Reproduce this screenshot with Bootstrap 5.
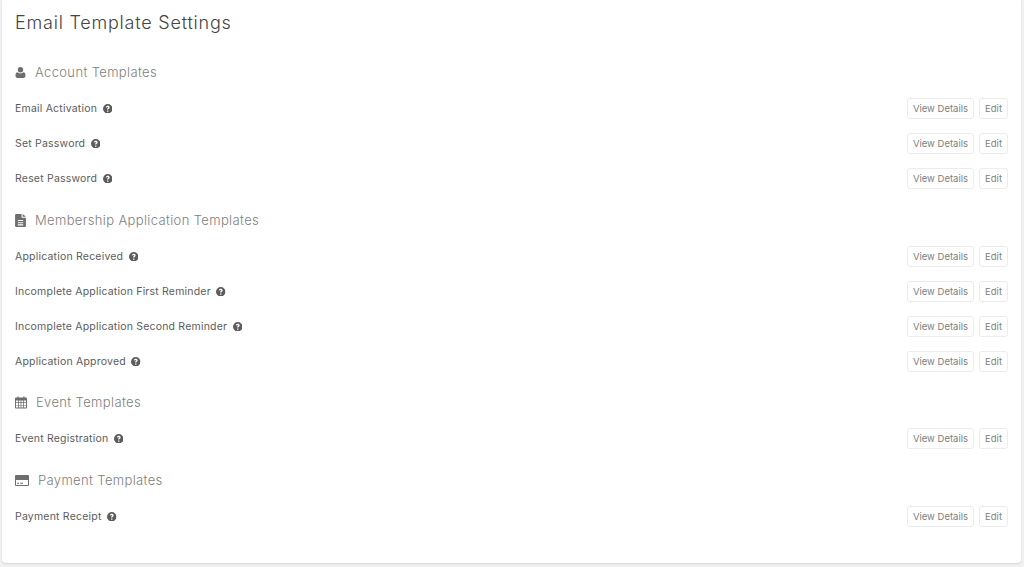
<!DOCTYPE html>
<html lang="en">
<head>
    <meta charset="UTF-8">
    <meta name="viewport" content="width=device-width, initial-scale=1.0">
    <title>Email Template Settings</title>
    <link href="https://cdn.jsdelivr.net/npm/bootstrap@5.3.0/dist/css/bootstrap.min.css" rel="stylesheet">
    <style>
        html, body { height: 100%; }
        body { background: #f1f1f1; font-family: Inter, "Open Sans", "Liberation Sans", sans-serif; overflow: hidden; }
        .sheet { margin: 0 3px 0 2px; height: 563px; border: 0; border-radius: 0 0 4px 4px; padding: 12px 13px 0; box-shadow: 0 1px 2px rgba(0,0,0,.12); }
        .page-title { font-size: 18px; line-height: 22px; font-weight: 300; color: #444; margin: 0 0 28px; letter-spacing: .78px; }
        .group-title { font-size: 13px; line-height: 21px; height: 21px; font-weight: 300; color: #808080; margin: 14px 0 8px; letter-spacing: .36px; gap: 9px; }
        .group-first { margin-top: 0; }
        .group-tight { margin-top: 13px; }
        .group-title svg { fill: #6e6e6e; display: block; }
        .tpl-row { height: 35px; font-size: 10.5px; color: #5c5c5c; letter-spacing: .2px; }
        .tip { width: 9.5px; height: 9.5px; fill: #5c5c5c; margin-left: 5.5px; }
        .btn-group-tpl { gap: 5px; }
        .btn-tpl { font-size: 9.5px; line-height: 13px; padding: 3px 5px; color: #808080; background: #fff; border: 1px solid #ececec; border-radius: 3px; letter-spacing: 0; }
    </style>
</head>
<body>
    <svg width="0" height="0" class="position-absolute">
        <symbol id="i-help" viewBox="0 0 16 16">
            <path fill-rule="evenodd" d="M8 0a8 8 0 1 1 0 16A8 8 0 0 1 8 0zM8 3C6.200 3 5 4 4.700 5.500l2 .5C6.900 5.300 7.300 5 8 5c.6 0 1 .3 1 .8 0 .5-.4.700-1 1.100-.7.400-1.100 1-1.100 1.900v.4h2.100v-.3c0-.4.300-.6.900-1 .8-.5 1.300-1.100 1.300-2.200C11.200 4 9.800 3 8 3zM6.900 10.800v2.100h2.200v-2.100H6.900z"/>
        </symbol>
    </svg>
    <div class="card sheet">
        <h1 class="page-title">Email Template Settings</h1>

        <!-- Account -->
        <div class="group-title group-first d-flex align-items-center">
            <svg width="11" height="11" viewBox="0 0 10 11"><path d="M5 0a2.700 2.700 0 1 1 0 5.400A2.700 2.700 0 0 1 5 0zM2 5.300C2.800 6 3.800 6.400 5 6.400s2.200-.4 3-1.100c1.300.1 2 1.300 2 3.200 0 1.500-.8 2.500-2 2.500H2c-1.200 0-2-1-2-2.500 0-1.900.7-3.100 2-3.200z"/></svg>
            <span>Account Templates</span>
        </div>
        <div class="tpl-row d-flex align-items-center">
            <span>Email Activation</span><svg class="tip"><use href="#i-help"/></svg>
            <div class="ms-auto d-flex btn-group-tpl"><button class="btn btn-tpl">View Details</button><button class="btn btn-tpl">Edit</button></div>
        </div>
        <div class="tpl-row d-flex align-items-center">
            <span>Set Password</span><svg class="tip"><use href="#i-help"/></svg>
            <div class="ms-auto d-flex btn-group-tpl"><button class="btn btn-tpl">View Details</button><button class="btn btn-tpl">Edit</button></div>
        </div>
        <div class="tpl-row d-flex align-items-center">
            <span>Reset Password</span><svg class="tip"><use href="#i-help"/></svg>
            <div class="ms-auto d-flex btn-group-tpl"><button class="btn btn-tpl">View Details</button><button class="btn btn-tpl">Edit</button></div>
        </div>

        <!-- Membership -->
        <div class="group-title d-flex align-items-center">
            <svg width="11" height="13" viewBox="0 0 10 12"><path fill-rule="evenodd" d="M1 0h5v3.500h4V11a1 1 0 0 1-1 1H1a1 1 0 0 1-1-1V1a1 1 0 0 1 1-1zM7 0l3 2.600H7zM2.500 5.500v1h5v-1zM2.500 7.500v1h5v-1zM2.500 9.500v1h5v-1z"/></svg>
            <span>Membership Application Templates</span>
        </div>
        <div class="tpl-row d-flex align-items-center">
            <span>Application Received</span><svg class="tip"><use href="#i-help"/></svg>
            <div class="ms-auto d-flex btn-group-tpl"><button class="btn btn-tpl">View Details</button><button class="btn btn-tpl">Edit</button></div>
        </div>
        <div class="tpl-row d-flex align-items-center">
            <span>Incomplete Application First Reminder</span><svg class="tip"><use href="#i-help"/></svg>
            <div class="ms-auto d-flex btn-group-tpl"><button class="btn btn-tpl">View Details</button><button class="btn btn-tpl">Edit</button></div>
        </div>
        <div class="tpl-row d-flex align-items-center">
            <span>Incomplete Application Second Reminder</span><svg class="tip"><use href="#i-help"/></svg>
            <div class="ms-auto d-flex btn-group-tpl"><button class="btn btn-tpl">View Details</button><button class="btn btn-tpl">Edit</button></div>
        </div>
        <div class="tpl-row d-flex align-items-center">
            <span>Application Approved</span><svg class="tip"><use href="#i-help"/></svg>
            <div class="ms-auto d-flex btn-group-tpl"><button class="btn btn-tpl">View Details</button><button class="btn btn-tpl">Edit</button></div>
        </div>

        <!-- Event -->
        <div class="group-title group-tight d-flex align-items-center">
            <svg width="12" height="13" viewBox="0 0 12 12"><path fill-rule="evenodd" d="M2.500 0h1.200v1h4.600V0h1.200v1H11a1 1 0 0 1 1 1v9a1 1 0 0 1-1 1H1a1 1 0 0 1-1-1V2a1 1 0 0 1 1-1h1.500zM1 4v1.800h2.200V4zM4 4v1.800h1.600V4zM6.400 4v1.800H8V4zM8.800 4v1.800H11V4zM1 6.500v1.900h2.200V6.500zM4 6.500v1.900h1.600V6.500zM6.400 6.500v1.900H8V6.500zM8.800 6.500v1.900H11V6.500zM1 9.100V11h2.200V9.100zM4 9.100V11h1.600V9.100zM6.400 9.100V11H8V9.100zM8.800 9.100V11H11V9.100z"/></svg>
            <span>Event Templates</span>
        </div>
        <div class="tpl-row d-flex align-items-center">
            <span>Event Registration</span><svg class="tip"><use href="#i-help"/></svg>
            <div class="ms-auto d-flex btn-group-tpl"><button class="btn btn-tpl">View Details</button><button class="btn btn-tpl">Edit</button></div>
        </div>

        <!-- Payment -->
        <div class="group-title d-flex align-items-center">
            <svg width="14" height="11" viewBox="0 0 14 11"><path fill-rule="evenodd" d="M1 0h12a1 1 0 0 1 1 1v9a1 1 0 0 1-1 1H1a1 1 0 0 1-1-1V1a1 1 0 0 1 1-1zM1 5v5h12V5zM2 7.800v1h2v-1zM5 7.800v1h3v-1z"/></svg>
            <span>Payment Templates</span>
        </div>
        <div class="tpl-row d-flex align-items-center">
            <span>Payment Receipt</span><svg class="tip"><use href="#i-help"/></svg>
            <div class="ms-auto d-flex btn-group-tpl"><button class="btn btn-tpl">View Details</button><button class="btn btn-tpl">Edit</button></div>
        </div>
    </div>
    <script src="https://cdn.jsdelivr.net/npm/bootstrap@5.3.0/dist/js/bootstrap.bundle.min.js"></script>
</body>
</html>
